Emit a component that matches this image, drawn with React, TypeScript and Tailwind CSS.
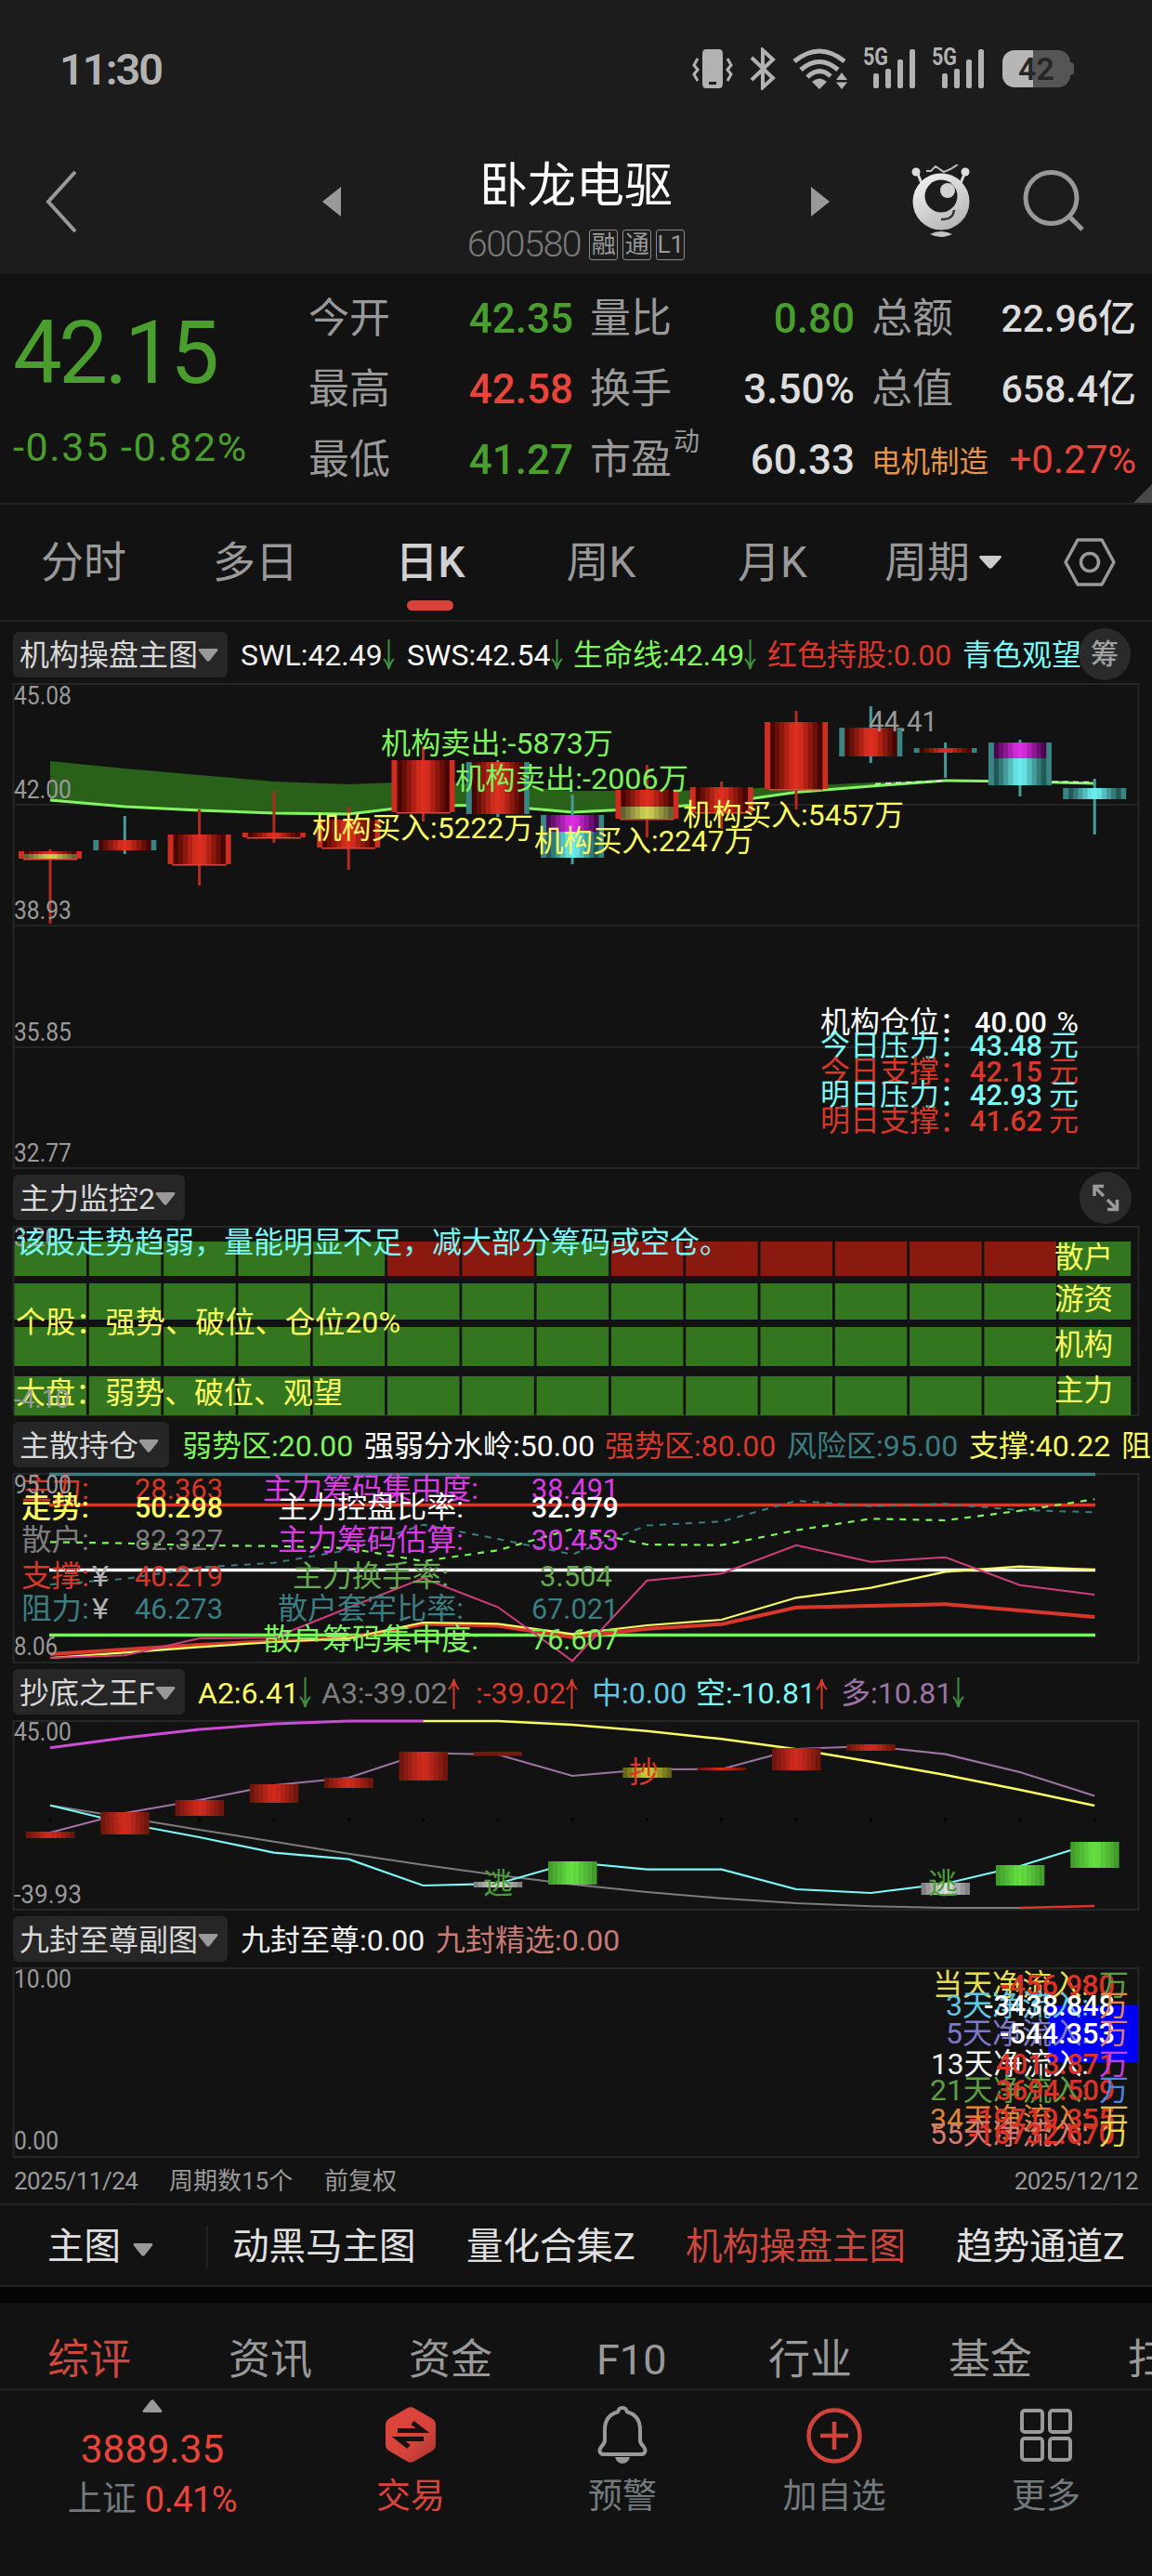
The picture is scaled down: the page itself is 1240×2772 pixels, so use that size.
import type { ReactNode } from 'react';
import { clsx } from 'clsx';

/* ---------- shared helpers ---------- */

const STEP = 80.3;
const FIRST_X = 54;
const columnX = (index: number) => FIRST_X + index * STEP;

const toPoints = (ys: number[], from = 0) =>
  ys.map((y, i) => `${columnX(from + i).toFixed(1)},${y}`).join(' ');

interface LabelProps {
  x: number;
  y: number;
  w?: number;
  fill: string;
  size?: number;
  weight?: number;
  anchor?: 'start' | 'middle' | 'end';
  children: string;
}

function Label({ x, y, w, fill, size = 32, weight = 400, anchor, children }: LabelProps) {
  return (
    <text
      x={x}
      y={y}
      fill={fill}
      fontSize={size}
      fontWeight={weight}
      textAnchor={anchor}
      textLength={w}
      lengthAdjust={w ? 'spacingAndGlyphs' : undefined}
    >
      {children}
    </text>
  );
}

function AxisLabel({ y, w, children }: { y: number; w: number; children: string }) {
  return (
    <Label x={15} y={y} w={w} size={27} fill="#999999">
      {children}
    </Label>
  );
}

type Rgb = [number, number, number];

const PALETTE: Record<string, { edge: Rgb; core: Rgb }> = {
  red: { edge: [70, 5, 0], core: [220, 47, 32] },
  magenta: { edge: [75, 5, 80], core: [220, 45, 228] },
  cyan: { edge: [35, 88, 86], core: [108, 236, 236] },
  yellow: { edge: [96, 100, 52], core: [206, 206, 82] },
  barRed: { edge: [112, 22, 14], core: [206, 42, 30] },
  barGreen: { edge: [66, 158, 42], core: [100, 220, 66] },
  barWhite: { edge: [130, 130, 130], core: [220, 220, 220] },
  barYellow: { edge: [104, 104, 24], core: [200, 200, 60] },
};

// Vertical stripes shading from the edge colour to the core colour and back
function Cylinder({
  x,
  y,
  width,
  height,
  tone,
}: {
  x: number;
  y: number;
  width: number;
  height: number;
  tone: string;
}) {
  const { edge, core } = PALETTE[tone];
  const count = 11;
  const stripe = width / count;
  return (
    <g>
      {Array.from({ length: count }, (_, i) => {
        const t = Math.min(1, (1 - Math.abs(i - 5) / 5) * 1.15);
        const rgb = edge.map((c, k) => Math.round(c + (core[k] - c) * t));
        return (
          <rect
            key={i}
            x={x + i * stripe}
            y={y}
            width={stripe + 0.4}
            height={height}
            fill={`rgb(${rgb.join(',')})`}
          />
        );
      })}
    </g>
  );
}

function Panel({ top, bottom, children }: { top: number; bottom: number; children: ReactNode }) {
  return (
    <svg
      className="block w-full shrink-0 overflow-visible"
      viewBox={`0 ${top} 1240 ${bottom - top}`}
      width={1240}
      height={bottom - top}
    >
      <rect
        x={14.5}
        y={top + 1}
        width={1211}
        height={bottom - top - 2}
        fill="none"
        stroke="#262626"
        strokeWidth={2}
      />
      {children}
    </svg>
  );
}

function Caret({ className }: { className?: string }) {
  return (
    <svg className={className} width={22} height={14} viewBox="0 0 22 14" fill="currentColor">
      <path d="M1.5 0h19q1.6 1 .4 2.6L12.6 13q-1.600 1.4-3.200 0L1.100 2.600Q0 1 1.500 0z" />
    </svg>
  );
}

function Trend({ dir }: { dir: 'up' | 'down' }) {
  return (
    <svg
      className={clsx('shrink-0', dir === 'up' ? 'rotate-180 text-[#d33a2c]' : 'text-[#3f8f42]')}
      width={13}
      height={34}
      viewBox="0 0 13 34"
      fill="none"
      stroke="currentColor"
      strokeWidth={2}
    >
      <path d="M6.500 0v32M1 21q4 4 5.500 11q1.500-7 5.500-11" />
    </svg>
  );
}

interface Reading {
  text: string;
  color: string;
  dir?: 'up' | 'down';
  width: string;
}

function IndicatorBar({
  name,
  nameWidth,
  readings = [],
  first,
  children,
}: {
  name: string;
  nameWidth: string;
  readings?: Reading[];
  first?: boolean;
  children?: ReactNode;
}) {
  return (
    <div
      className={clsx(
        'flex w-full shrink-0 items-center overflow-hidden pl-[14px] text-[32px] leading-none whitespace-nowrap',
        first ? 'h-[66px] pt-1' : 'h-[61px]'
      )}
    >
      <div
        className={clsx(
          'mr-[14px] flex h-[49px] shrink-0 items-center rounded-md bg-[#262626] pt-[2px] pl-[7px] text-[#d8d8d8]',
          nameWidth
        )}
      >
        {name}
        <Caret className="text-[#999999]" />
      </div>
      {readings.map((reading) => (
        <div
          key={reading.text}
          className={clsx('mr-[12px] flex shrink-0 items-center pt-[2px]', reading.width)}
        >
          <span className={reading.color}>{reading.text}</span>
          {reading.dir && <Trend dir={reading.dir} />}
        </div>
      ))}
      {children}
    </div>
  );
}

/* ---------- status bar and title ---------- */

function Signal() {
  return (
    <svg className="overflow-visible" width={62} height={46} viewBox="0 0 62 46" fill="#b2b2b2">
      <text x={0} y={19} fontSize={25} fontWeight={700} textLength={27} lengthAdjust="spacingAndGlyphs">
        5G
      </text>
      <rect x={11} y={28} width={6} height={16} rx={2} />
      <rect x={24} y={23} width={6} height={21} rx={2} />
      <rect x={37} y={13} width={6} height={31} rx={2} />
      <rect x={50} y={2} width={6} height={42} rx={2} />
    </svg>
  );
}

function StatusBar() {
  return (
    <div className="flex h-[148px] items-center pr-[84px] pl-[64px] text-[#b2b2b2]">
      <span className="text-[47px] leading-none font-semibold tracking-[-2px]">11:30</span>
      <div className="ml-auto flex items-center">
        {/* Vibrate */}
        <svg width={44} height={46} viewBox="0 0 44 46" fill="none" stroke="#b2b2b2" strokeWidth={3}>
          <path
            fill="#b2b2b2"
            stroke="none"
            fillRule="evenodd"
            d="M15 2h14q4 0 4 5v32q0 5-4 5H15q-4 0-4-5V7q0-5 4-5zm3 35v3h8v-3z"
          />
          <path d="M6 12l-4 7 4 5-4 5 4 7M38 12l4 7-4 5 4 5-4 7" />
        </svg>
        {/* Bluetooth */}
        <svg className="ml-[17px]" width={30} height={46} viewBox="0 0 30 46" fill="none" stroke="#b2b2b2" strokeWidth={4}>
          <path d="M3 11l23 22-11 10V3l11 10L3 35" />
        </svg>
        {/* Wifi */}
        <svg className="ml-[16px]" width={62} height={46} viewBox="0 0 62 46" fill="none" stroke="#b2b2b2" strokeWidth={5}>
          <path d="M3 15Q30-7 57 15M10 24Q30 7 50 24M17 32Q30 20 42 31" />
          <path d="M22 37q8-7 16 0l-8 8z" fill="#b2b2b2" stroke="none" />
          <path d="M48 35l6-8 6 8zM48 37.500h12l-6 7.500z" fill="#b2b2b2" stroke="none" />
        </svg>
        <div className="ml-[15px] flex gap-[12px]">
          <Signal />
          <Signal />
        </div>
        {/* Battery */}
        <div className="ml-[14px] flex items-center">
          <div className="flex h-[40px] w-[73px] items-center justify-center rounded-[13px] bg-linear-to-r from-[#b6b6b6] from-45% to-[#555555] to-45% text-[34px] leading-none font-semibold text-[#262626]">
            42
          </div>
          <div className="h-[14px] w-[4px] rounded-r bg-[#555555]" />
        </div>
      </div>
    </div>
  );
}

function Robot() {
  return (
    <svg width={64} height={80} viewBox="0 0 64 80">
      <defs>
        <linearGradient id="robot" x1="0" y1="0" x2="0.600" y2="1">
          <stop offset="0" stopColor="#f6f6f6" />
          <stop offset="1" stopColor="#b8b8b8" />
        </linearGradient>
      </defs>
      <path d="M6 8l5 12M58 8l-5 12" stroke="#d8d8d8" strokeWidth={3} />
      <circle cx={5} cy={8} r={4.500} fill="#dddddd" />
      <circle cx={58} cy={8} r={4.500} fill="#dddddd" />
      <path d="M16 7h5l5-5 9 6 7-3 8-5" fill="none" stroke="#bdbdbd" strokeWidth={2} />
      <circle cx={32} cy={40} r={30.500} fill="url(#robot)" />
      <circle cx={32} cy={34} r={17.500} fill="#1c1c1c" />
      <circle cx={39} cy={28} r={8} fill="#d2d2d2" />
      <path d="M32 59q13 1 14-10" fill="none" stroke="#333333" strokeWidth={2.500} />
      <path d="M20 75q12-6 24 0-12 6-24 0z" fill="#c4c4c4" />
    </svg>
  );
}

function TitleBar() {
  return (
    <div className="flex h-[147px] items-start">
      <svg className="mt-[36px] ml-[48px]" width={36} height={66} viewBox="0 0 36 66" fill="none" stroke="#999999" strokeWidth={4}>
        <path d="M33 1L4 33l29 32" />
      </svg>
      <svg className="mt-[53px] ml-[263px]" width={20} height={32} viewBox="0 0 20 32" fill="#999999">
        <path d="M20 0v32L0 16z" />
      </svg>
      <div className="flex w-[506px] flex-col items-center pt-[26px]">
        <h1 className="text-[52px] leading-[54px] text-white">卧龙电驱</h1>
        <div className="mt-[18px] flex h-[34px] items-center gap-[5px] text-[#999999]">
          <span className="mr-[4px] text-[39.500px] leading-none font-light tracking-[-1.500px] text-[#7a7a7a]">
            600580
          </span>
          {['融', '通', 'L1'].map((tag) => (
            <span
              key={tag}
              className="flex h-[33px] w-[31px] items-center justify-center rounded-[3px] border-[1.500px] border-[#8c8c8c] text-[26px] leading-none"
            >
              {tag}
            </span>
          ))}
        </div>
      </div>
      <svg className="mt-[53px]" width={20} height={32} viewBox="0 0 20 32" fill="#999999">
        <path d="M0 0v32l20-16z" />
      </svg>
      <div className="mt-[29px] ml-[88px]">
        <Robot />
      </div>
      <svg className="mt-[34px] ml-[55px]" width={68} height={68} viewBox="0 0 68 68" fill="none" stroke="#999999" strokeWidth={5}>
        <circle cx={31.500} cy={31} r={27.500} />
        <path d="M50 50l15 15" />
      </svg>
    </div>
  );
}

/* ---------- quote ---------- */

const QUOTES = [
  [
    { label: '今开', value: '42.35', color: 'text-[#4a9e2e]' },
    { label: '最高', value: '42.58', color: 'text-[#e8453a]' },
    { label: '最低', value: '41.27', color: 'text-[#4a9e2e]' },
  ],
  [
    { label: '量比', value: '0.80', color: 'text-[#4a9e2e]' },
    { label: '换手', value: '3.50%', color: 'text-[#dddddd]' },
    { label: '市盈', note: '动', value: '60.33', color: 'text-[#dddddd]' },
  ],
];

function Quote() {
  return (
    <div className="flex h-[248px] shrink-0 border-b-2 border-[#242424]">
      <div className="w-[332px] shrink-0 pl-[14px] text-[#4a9e2e]">
        <div className="mt-[38px] text-[94px] leading-none tracking-[-3.500px]">42.15</div>
        <div className="mt-[33px] text-[43px] leading-none tracking-[1.600px] whitespace-nowrap">
          -0.35 -0.82%
        </div>
      </div>
      <div className="flex flex-1 gap-[18px] pt-[10px] text-[44px] leading-none">
        {QUOTES.map((column, index) => (
          <div key={index} className="w-[285px] shrink-0">
            {column.map((row) => (
              <div key={row.label} className="flex h-[76px] items-center">
                <span className="text-[#999999]">{row.label}</span>
                {row.note && (
                  <span className="mb-[38px] ml-[2px] text-[28px] text-[#999999]">{row.note}</span>
                )}
                <span className={clsx('ml-auto font-medium', row.color)}>{row.value}</span>
              </div>
            ))}
          </div>
        ))}
        <div className="w-[285px] shrink-0">
          <div className="flex h-[76px] items-center justify-between">
            <span className="text-[#999999]">总额</span>
            <span className="text-[41px] font-medium text-[#dddddd]">22.96亿</span>
          </div>
          <div className="flex h-[76px] items-center justify-between">
            <span className="text-[#999999]">总值</span>
            <span className="text-[41px] font-medium text-[#dddddd]">658.4亿</span>
          </div>
          <div className="flex h-[76px] items-center justify-between">
            <span className="pt-[6px] text-[31.500px] text-[#e8954c]">电机制造</span>
            <span className="text-[42px] text-[#e8453a]">+0.27%</span>
          </div>
        </div>
        <svg className="mt-[216px] -ml-[21px] shrink-0" width={20} height={20} viewBox="0 0 20 20" fill="#484848">
          <path d="M20 0v20H0z" />
        </svg>
      </div>
    </div>
  );
}

function PeriodTabs() {
  return (
    <div className="flex h-[126px] shrink-0 border-b-2 border-[#242424] text-[46px] leading-none text-[#999999]">
      <div className="flex w-[180px] items-center justify-center">分时</div>
      <div className="flex w-[190px] items-center justify-center">多日</div>
      <div className="flex w-[186px] flex-col items-center pt-[39px] text-[#d0d0d0]">
        <span className="h-[46px] font-medium">日K</span>
        <span className="mt-[18px] h-[11px] w-[50px] rounded-full bg-[#d5433b]" />
      </div>
      <div className="flex w-[182px] items-center justify-center">周K</div>
      <div className="flex w-[187px] items-center justify-center">月K</div>
      <div className="flex flex-1 items-center pl-[27px]">
        周期
        <Caret className="ml-[11px] scale-x-115 text-[#cccccc]" />
        <svg className="ml-[68px]" width={56} height={52} viewBox="0 0 56 52" fill="none" stroke="#999999" strokeWidth={3.500}>
          <path d="M15 2h26l13 24-13 24H15L2 26z" strokeLinejoin="round" />
          <circle cx={28} cy={26} r={9.500} />
        </svg>
      </div>
    </div>
  );
}

/* ---------- main chart ---------- */

interface Candle {
  frame: 'red' | 'teal';
  high: number;
  top: number;
  bottom: number;
  low: number;
  tone: string;
  lower?: string;
  split?: number;
}

const CANDLES: Candle[] = [
  { frame: 'red', high: 914, top: 916, bottom: 924, low: 994, tone: 'red', lower: 'yellow', split: 919 },
  { frame: 'teal', high: 878, top: 904, bottom: 915, low: 919, tone: 'red' },
  { frame: 'red', high: 871, top: 898, bottom: 930, low: 953, tone: 'red' },
  { frame: 'red', high: 851, top: 896, bottom: 901, low: 907, tone: 'red' },
  { frame: 'red', high: 868, top: 882, bottom: 912, low: 936, tone: 'red' },
  { frame: 'red', high: 803, top: 818, bottom: 874, low: 884, tone: 'red' },
  { frame: 'teal', high: 818, top: 820, bottom: 876, low: 879, tone: 'red' },
  { frame: 'teal', high: 855, top: 877, bottom: 923, low: 930, tone: 'magenta', lower: 'cyan', split: 895 },
  { frame: 'red', high: 823, top: 850, bottom: 881, low: 901, tone: 'red', lower: 'yellow', split: 868 },
  { frame: 'red', high: 841, top: 847, bottom: 874, low: 892, tone: 'red' },
  { frame: 'red', high: 765, top: 777, bottom: 849, low: 871, tone: 'red' },
  { frame: 'teal', high: 760, top: 783, bottom: 814, low: 821, tone: 'red' },
  { frame: 'teal', high: 799, top: 805, bottom: 810, low: 837, tone: 'red' },
  { frame: 'teal', high: 796, top: 799, bottom: 845, low: 857, tone: 'magenta', lower: 'cyan', split: 816 },
  { frame: 'teal', high: 838, top: 848, bottom: 860, low: 898, tone: 'cyan' },
];

const LIFE_LINE = [861, 868, 872, 875, 876, 866.500, 867, 874, 870, 864, 852.500, 846, 840, 841, 843];
const BAND_TOP = [819, 827, 834, 841, 844, 841, 845, 851, 851, 850, 846, 842, 839, 841, 843];

function CandleShape({ candle, x }: { candle: Candle; x: number }) {
  const { frame, high, top, bottom, low, tone, lower, split } = candle;
  const border = frame === 'red' ? '#cf2d20' : '#3b8484';
  const wick = frame === 'red' ? '#b32a1f' : '#4a9a9a';
  return (
    <g>
      <rect x={x - 1.500} y={high} width={3} height={low - high} fill={wick} />
      <rect x={x - 34} y={top} width={68} height={bottom - top} fill={border} />
      {frame === 'red' && <rect x={x - 29} y={bottom} width={58} height={1.500} fill="#d8463a" />}
      <Cylinder x={x - 28} y={top} width={56} height={(split ?? bottom) - top} tone={tone} />
      {lower && split && <Cylinder x={x - 28} y={split} width={56} height={bottom - split} tone={lower} />}
    </g>
  );
}

const LEVELS = [
  { label: '机构仓位：', value: '40.00', unit: '%', y: 1111, fill: '#ffffff', offset: 5 },
  { label: '今日压力：', value: '43.48', unit: '元', y: 1136, fill: '#7df6f6', offset: 0 },
  { label: '今日支撑：', value: '42.15', unit: '元', y: 1164, fill: '#d8372a', offset: 0 },
  { label: '明日压力：', value: '42.93', unit: '元', y: 1189, fill: '#7df6f6', offset: 0 },
  { label: '明日支撑：', value: '41.62', unit: '元', y: 1217, fill: '#d8372a', offset: 0 },
];

function MainChart() {
  const band = `${toPoints(BAND_TOP)} ${toPoints(LIFE_LINE).split(' ').reverse().join(' ')}`;
  return (
    <Panel top={735} bottom={1258}>
      {[866, 996, 1127].map((y) => (
        <line key={y} x1={14} x2={1225} y1={y} y2={y} stroke="#242424" strokeWidth={2} />
      ))}
      <polygon points={band} fill="#2a611a" />
      <polyline points={toPoints(LIFE_LINE)} fill="none" stroke="#82f561" strokeWidth={3} />
      <path d="M942 843.500L1018 840M1100 841l78 0.500" stroke="#e8e8e8" strokeWidth={1.500} strokeDasharray="6 5" />
      {CANDLES.map((candle, i) => (
        <CandleShape key={i} candle={candle} x={columnX(i)} />
      ))}

      <AxisLabel y={758} w={62}>45.08</AxisLabel>
      <AxisLabel y={859} w={62}>42.00</AxisLabel>
      <AxisLabel y={989} w={62}>38.93</AxisLabel>
      <AxisLabel y={1120} w={62}>35.85</AxisLabel>
      <AxisLabel y={1250} w={62}>32.77</AxisLabel>

      <Label x={410} y={811} w={250} fill="#7df35e">机构卖出:-5873万</Label>
      <Label x={490} y={849} w={251} fill="#7df35e">机构卖出:-2006万</Label>
      <Label x={336} y={902} w={238} fill="#fafa62">机构买入:5222万</Label>
      <Label x={575} y={916} w={236} fill="#fafa62">机构买入:2247万</Label>
      <Label x={735} y={888} w={238} fill="#fafa62">机构买入:5457万</Label>
      <Label x={935} y={787} w={74} fill="#999999">44.41</Label>

      {LEVELS.map((level) => (
        <g key={level.label}>
          <Label x={883} y={level.y} fill={level.fill}>{level.label}</Label>
          <Label x={1044 + level.offset} y={level.y} w={78} weight={500} fill={level.fill}>
            {level.value}
          </Label>
          <Label x={1161} y={level.y} anchor="end" fill={level.fill}>{level.unit}</Label>
        </g>
      ))}
    </Panel>
  );
}

/* ---------- force monitor ---------- */

const HEAT_ROWS = [
  { label: '散户', y: 1336, height: 37, textY: 1364, red: [5, 6, 8, 9, 10, 11, 12, 13] },
  { label: '游资', y: 1381, height: 39, textY: 1409, red: [] },
  { label: '机构', y: 1428, height: 42, textY: 1458, red: [] },
  { label: '主力', y: 1481, height: 42, textY: 1507, red: [] },
];

function HeatPanel() {
  return (
    <Panel top={1319} bottom={1524}>
      {HEAT_ROWS.map((row) =>
        Array.from({ length: 15 }, (_, i) => (
          <rect
            key={`${row.label}${i}`}
            x={15.500 + i * STEP}
            y={row.y}
            width={77.500}
            height={row.height}
            fill={(row.red as number[]).includes(i) ? '#8a1910' : '#33761f'}
          />
        ))
      )}
      {HEAT_ROWS.map((row) => (
        <Label key={row.label} x={1135} y={row.textY} w={63} fill="#fafa62">
          {row.label}
        </Label>
      ))}
      <AxisLabel y={1341} w={47}>3.20</AxisLabel>
      <Label x={17} y={1348} w={768} fill="#7df6f6">
        该股走势趋弱，量能明显不足，减大部分筹码或空仓。
      </Label>
      <Label x={17} y={1434} w={414} fill="#fafa62">个股：强势、破位、仓位20%</Label>
      <Label x={17} y={1510} w={352} fill="#fafa62">大盘：弱势、破位、观望</Label>
      <AxisLabel y={1515} w={60}>-4.10</AxisLabel>
    </Panel>
  );
}

/* ---------- holdings ---------- */

const HOLD_LINES = [
  {
    color: '#3b7d80',
    width: 2,
    dash: '7 7',
    ys: [1705, 1699, 1686.700, 1681.700, 1668, 1640.700, 1656, 1672.700, 1641.500, 1637.300, 1615, 1620.700, 1618.300, 1625, 1627.300],
  },
  {
    color: '#7df35e',
    width: 2.200,
    dash: '7 7',
    ys: [1659.300, 1660.700, 1663, 1663.700, 1666, 1680, 1668.300, 1645.300, 1662, 1662.700, 1646.700, 1634.300, 1636, 1625.700, 1613.300],
  },
  {
    color: '#d8372a',
    width: 4,
    ys: [1780, 1775, 1770, 1766, 1763, 1747.500, 1749.500, 1761.700, 1752.700, 1747.700, 1729.700, 1728, 1726.300, 1733, 1740],
  },
  {
    color: '#fafa62',
    width: 2.200,
    ys: [1784, 1778.300, 1772.300, 1767, 1763, 1746, 1747.300, 1758.300, 1749, 1743, 1719.300, 1708.700, 1691.300, 1685.700, 1689],
  },
  {
    color: '#cf3d7c',
    width: 2,
    ys: [1784, 1781.300, 1763, 1762.300, 1730, 1698.300, 1729.300, 1787.300, 1700.700, 1693.300, 1662.700, 1680.700, 1675.700, 1705.700, 1716],
  },
];

const HOLD_LEFT = [
  { label: '主力:', value: '28.363', y: 1613, fill: '#d8372a' },
  { label: '走势:', value: '50.298', y: 1633, fill: '#fafa62', weight: 500 },
  { label: '散户:', value: '82.327', y: 1668, fill: '#7d7d7d' },
  { label: '支撑:', value: '40.219', y: 1707, fill: '#d8372a', yuan: true },
  { label: '阻力:', value: '46.273', y: 1742, fill: '#3b7d80', yuan: true },
];

const HOLD_RIGHT = [
  { label: '主力筹码集中度:', x: 283, w: 232, value: '38.491', y: 1613, fill: '#dc3ae6' },
  { label: '主力控盘比率:', x: 299, w: 200, value: '32.979', y: 1633, fill: '#ffffff', weight: 500 },
  { label: '主力筹码估算:', x: 299, w: 200, value: '30.453', y: 1668, fill: '#dc3ae6' },
  { label: '主力换手率:', x: 315, w: 168, value: '3.504', y: 1707, fill: '#66aa50' },
  { label: '散户套牢比率:', x: 299, w: 200, value: '67.021', y: 1742, fill: '#3b7d80' },
  { label: '散户筹码集中度:', x: 283, w: 232, value: '76.607', y: 1775, fill: '#7df35e' },
];

function HoldingPanel() {
  return (
    <Panel top={1585} bottom={1790}>
      <line x1={53} x2={1179} y1={1619.500} y2={1619.500} stroke="#d8372a" strokeWidth={3.500} />
      <line x1={53} x2={1179} y1={1689.500} y2={1689.500} stroke="#ffffff" strokeWidth={3.500} />
      <line x1={53} x2={1179} y1={1759.500} y2={1759.500} stroke="#7df35e" strokeWidth={3.500} />
      <line x1={53} x2={1179} y1={1586.500} y2={1586.500} stroke="#3b7d80" strokeWidth={3.500} />
      {HOLD_LINES.map((line) => (
        <polyline
          key={line.color}
          points={toPoints(line.ys)}
          fill="none"
          stroke={line.color}
          strokeWidth={line.width}
          strokeDasharray={line.dash}
        />
      ))}
      {HOLD_LEFT.map((row) => (
        <g key={row.label}>
          <Label x={23} y={row.y} w={73} fill={row.fill} weight={row.weight}>{row.label}</Label>
          {row.yuan && <Label x={99} y={row.y} w={18} fill="#b0b0b0">¥</Label>}
          <Label x={145} y={row.y} w={95} fill={row.fill} weight={row.weight}>{row.value}</Label>
        </g>
      ))}
      {HOLD_RIGHT.map((row) => (
        <g key={row.label}>
          <Label x={row.x} y={row.y} w={row.w} fill={row.fill}>{row.label}</Label>
          <Label
            x={row.value.length === 5 ? 581 : 572}
            y={row.y}
            w={row.value.length === 5 ? 78 : 94}
            fill={row.fill}
            weight={row.weight}
          >
            {row.value}
          </Label>
        </g>
      ))}
      <AxisLabel y={1607} w={62}>95.00</AxisLabel>
      <AxisLabel y={1781} w={47}>8.06</AxisLabel>
    </Panel>
  );
}

/* ---------- bottom king ---------- */

const BARS = [
  { i: 0, top: 1971, bottom: 1978, tone: 'barRed' },
  { i: 1, top: 1950, bottom: 1974, tone: 'barRed' },
  { i: 2, top: 1937, bottom: 1954, tone: 'barRed' },
  { i: 3, top: 1920, bottom: 1940, tone: 'barRed' },
  { i: 4, top: 1913, bottom: 1924, tone: 'barRed' },
  { i: 5, top: 1885, bottom: 1916, tone: 'barRed' },
  { i: 8, top: 1902, bottom: 1913, tone: 'barYellow' },
  { i: 9, top: 1902, bottom: 1905, tone: 'barRed' },
  { i: 10, top: 1881, bottom: 1905, tone: 'barRed' },
  { i: 11, top: 1877, bottom: 1884, tone: 'barRed' },
  { i: 6, top: 2025, bottom: 2031, tone: 'barWhite' },
  { i: 12, top: 2026, bottom: 2039, tone: 'barWhite' },
  { i: 7, top: 2003, bottom: 2028, tone: 'barGreen' },
  { i: 13, top: 2007, bottom: 2029, tone: 'barGreen' },
  { i: 14, top: 1982, bottom: 2010, tone: 'barGreen' },
];

const KING_LINES = [
  { from: 0, color: '#cf4ad6', width: 3, ys: [1880.700, 1870, 1861, 1855, 1852, 1852] },
  { from: 5, color: '#fafa62', width: 2.500, ys: [1852, 1852, 1856, 1862.700, 1871.300, 1882.300, 1895.700, 1910, 1926, 1943] },
  {
    from: 0,
    color: '#7c7c7c',
    width: 2,
    ys: [1942.700, 1955.700, 1969, 1981.700, 1994.700, 2006.700, 2017.700, 2027.700, 2036, 2042.700, 2048, 2051.300, 2053, 2053],
  },
  { from: 13, color: '#d8372a', width: 2.500, ys: [2053, 2051] },
  {
    from: 0,
    color: '#9c73a3',
    width: 2.200,
    ys: [1972, 1951, 1937, 1921, 1913, 1886.500, 1888, 1911, 1904, 1903.700, 1882, 1879, 1887.700, 1907, 1932.500],
  },
  {
    from: 0,
    color: '#7df6f6',
    width: 2.200,
    ys: [1942.700, 1962, 1977, 1993.700, 2000.700, 2029, 2027, 2004, 2011.700, 2011.700, 2033, 2037, 2027, 2008, 1983],
  },
];

function KingPanel() {
  return (
    <Panel top={1851} bottom={2056}>
      {KING_LINES.map((line) => (
        <polyline
          key={line.color}
          points={toPoints(line.ys, line.from)}
          fill="none"
          stroke={line.color}
          strokeWidth={line.width}
        />
      ))}
      {Array.from({ length: 15 }, (_, i) => (
        <circle key={i} cx={columnX(i)} cy={1958} r={1.800} fill="#000000" />
      ))}
      <rect x={columnX(6) - 26} y={1885} width={52} height={4.500} fill="#7c170f" />
      {BARS.map((bar) => (
        <Cylinder
          key={bar.i}
          x={columnX(bar.i) - 26}
          y={bar.top}
          width={52}
          height={bar.bottom - bar.top}
          tone={bar.tone}
        />
      ))}
      <Label x={693} y={1918} anchor="middle" fill="#e03526">抄</Label>
      <Label x={536} y={2038} anchor="middle" fill="#4a9e36">逃</Label>
      <Label x={1015} y={2038} anchor="middle" fill="#4a9e36">逃</Label>
      <AxisLabel y={1873} w={62}>45.00</AxisLabel>
      <AxisLabel y={2048} w={73}>-39.93</AxisLabel>
    </Panel>
  );
}

/* ---------- net inflow ---------- */

const FLOWS = [
  { label: '当天净流入:', x: 1004, value: '-456.980', w: 124, y: 2147, fill: '#e4dd55', valueFill: '#dc3226', unitFill: '#5d9e42' },
  { label: '3天净流入:', x: 1018, value: '-3438.848', w: 141, y: 2169, fill: '#62c6e4', valueFill: '#ffffff', unitFill: '#e08a45' },
  { label: '5天净流入:', x: 1018, value: '-544.353', w: 124, y: 2199, fill: '#7c78c6', valueFill: '#ffffff', unitFill: '#d87f7a' },
  { label: '13天净流入:', x: 1002, value: '4013.871', w: 128, y: 2232, fill: '#f4f4f4', valueFill: '#dc3226', unitFill: '#c840dc' },
  { label: '21天净流入:', x: 1001, value: '3694.509', w: 128, y: 2260, fill: '#5d9e42', valueFill: '#dc3226', unitFill: '#4b86e0' },
  { label: '34天净流入:', x: 1001, value: '-19719.355', w: 158, y: 2291, fill: '#dd8538', valueFill: '#dc3226', unitFill: '#e4b94e' },
  { label: '55天净流入:', x: 1001, value: '-16732.670', w: 158, y: 2307, fill: '#d37a72', valueFill: '#dc3226', unitFill: '#e4dd55' },
];

function FlowPanel() {
  return (
    <Panel top={2117} bottom={2322}>
      <rect x={1128} y={2158} width={97} height={61} fill="#0000f5" />
      {FLOWS.map((flow) => (
        <g key={flow.label}>
          <Label x={flow.x} y={flow.y} w={1172 - flow.x} fill={flow.fill}>{flow.label}</Label>
          <Label x={1200} y={flow.y} w={flow.w} anchor="end" weight={500} fill={flow.valueFill}>
            {flow.value}
          </Label>
          <Label x={1183} y={flow.y} fill={flow.unitFill}>万</Label>
        </g>
      ))}
      <AxisLabel y={2139} w={62}>10.00</AxisLabel>
      <AxisLabel y={2313} w={48}>0.00</AxisLabel>
    </Panel>
  );
}

/* ---------- bottom bars ---------- */

function ChartSwitcher() {
  return (
    <div className="flex h-[90px] shrink-0 items-center border-t-2 border-b-2 border-[#242424] pt-[4px] pl-[51px] text-[39.500px] leading-none whitespace-nowrap text-[#e0e0e0]">
      <span className="w-[79px]">主图</span>
      <Caret className="mt-[6px] ml-[13px] text-[#999999]" />
      <span className="ml-[57px] h-[46px] w-[2px] bg-[#222222]" />
      <span className="ml-[26px] w-[252px]">动黑马主图</span>
      <span className="w-[236px]">量化合集Z</span>
      <span className="w-[291px] text-[#cb473d]">机构操盘主图</span>
      <span>趋势通道Z</span>
    </div>
  );
}

const SECTIONS = [
  { name: '综评', width: 'w-[195px]' },
  { name: '资讯', width: 'w-[194px]' },
  { name: '资金', width: 'w-[202px]' },
  { name: 'F10', width: 'w-[185px]' },
  { name: '行业', width: 'w-[194px]' },
  { name: '基金', width: 'w-[193px]' },
  { name: '扫', width: 'w-[45px]' },
];

function SectionTabs() {
  return (
    <div className="flex h-[95px] shrink-0 items-center overflow-hidden border-b-3 border-[#1e1e1e] pt-[31px] pl-[51px] text-[45px] leading-none text-[#999999]">
      {SECTIONS.map((section, i) => (
        <span
          key={section.name}
          className={clsx('shrink-0', section.width, i === 0 && 'text-[#d0473d]')}
        >
          {section.name}
        </span>
      ))}
    </div>
  );
}

function NavItem({ label, active, children }: { label: string; active?: boolean; children: ReactNode }) {
  return (
    <div
      className={clsx(
        'flex w-[228px] flex-col items-center pt-[15px]',
        active ? 'text-[#d8443b]' : 'text-[#727a7e]'
      )}
    >
      {children}
      <span className="mt-[16px] text-[37px] leading-none">{label}</span>
    </div>
  );
}

function BottomNav() {
  return (
    <div className="flex h-[199px] shrink-0">
      <div className="flex w-[328px] flex-col items-center pt-[9px]">
        <Caret className="rotate-180 text-[#999999]" />
        <span className="mt-[19px] text-[42.500px] leading-none text-[#e8453a]">3889.35</span>
        <span className="mt-[13px] flex items-center gap-[9px] text-[37px] leading-none text-[#727a7e]">
          上证
          <span className="text-[38px] tracking-[-0.500px] text-[#e8453a]">0.41%</span>
        </span>
      </div>
      <NavItem label="交易" active>
        <svg width={62} height={64} viewBox="0 0 62 64">
          <defs>
            <linearGradient id="trade" x1="0" y1="0" x2="1" y2="1">
              <stop offset="0" stopColor="#e0463d" />
              <stop offset="0.600" stopColor="#d6423a" />
              <stop offset="1" stopColor="#a8362f" />
            </linearGradient>
          </defs>
          <path
            d="M27 3.500q4-2.500 8 0l19 11q4 2.500 4 7v21q0 4.500-4 7l-19 11q-4 2.500-8 0l-19-11q-4-2.500-4-7v-21q0-4.500 4-7z"
            fill="url(#trade)"
          />
          <path d="M17 27.500h27L33 19M45 36.500H18L29 45" fill="none" stroke="#1a1010" strokeWidth={5} />
        </svg>
      </NavItem>
      <NavItem label="预警">
        <svg width={62} height={64} viewBox="0 0 62 64" fill="none" stroke="#999999" strokeWidth={4}>
          <path
            d="M31 3q4 0 5 4.500Q50 11 50 27v11q0 3 3.500 6.500 3 4 1.500 6.500-1 2-4 2H11q-3 0-4-2-1.500-2.500 1.500-6.500Q12 41 12 38V27Q12 11 26 7.500 27 3 31 3z"
            strokeLinejoin="round"
          />
          <path d="M23 56h16q-2 7-8 7t-8-7z" fill="#999999" stroke="none" />
        </svg>
      </NavItem>
      <NavItem label="加自选">
        <svg width={62} height={64} viewBox="0 0 62 64" fill="none" stroke="#d0433a" strokeWidth={4.500}>
          <circle cx={31} cy={33} r={27.500} />
          <path d="M16 33h30M31 18v30" />
        </svg>
      </NavItem>
      <NavItem label="更多">
        <svg width={62} height={64} viewBox="0 0 62 64" fill="none" stroke="#999999" strokeWidth={4}>
          <rect x={5} y={6} width={22} height={23} rx={3} />
          <rect x={35} y={6} width={22} height={23} rx={3} />
          <rect x={5} y={36} width={22} height={23} rx={3} />
          <rect x={35} y={36} width={22} height={23} rx={3} />
        </svg>
      </NavItem>
    </div>
  );
}

export default function App() {
  return (
    <div className="flex h-[2772px] w-[1240px] flex-col overflow-hidden bg-[#121212] font-['Roboto','Noto_Sans_CJK_SC',sans-serif]">
      <header className="h-[295px] shrink-0 bg-[#1c1c1c]">
        <StatusBar />
        <TitleBar />
      </header>
      <Quote />
      <PeriodTabs />

      <IndicatorBar
        first
        name="机构操盘主图"
        nameWidth="w-[231px]"
        readings={[
          { text: 'SWL:42.49', color: 'text-[#f0f0f0]', dir: 'down', width: 'w-[167px]' },
          { text: 'SWS:42.54', color: 'text-white', dir: 'down', width: 'w-[167px]' },
          { text: '生命线:42.49', color: 'text-[#7df35e]', dir: 'down', width: 'w-[197px]' },
          { text: '红色持股:0.00', color: 'text-[#d8372a]', width: 'w-[198px]' },
        ]}
      >
        <span className="w-[125px] shrink-0 pt-[2px] text-[#7df6f6]">青色观望</span>
        <span className="flex size-[56px] shrink-0 items-center justify-center rounded-full bg-[#2a2a2a] text-[30px] font-medium text-[#a0a0a0]">
          筹
        </span>
      </IndicatorBar>
      <MainChart />

      <IndicatorBar name="主力监控2" nameWidth="w-[185px]">
        <span className="mr-[22px] ml-auto flex size-[56px] items-center justify-center rounded-full bg-[#2a2a2a]">
          <svg width={30} height={30} viewBox="0 0 30 30" fill="none" stroke="#999999" strokeWidth={3.500}>
            <path d="M13 2.500H3V13M3 3l10 10M17 27.500h10.500V17M27 27L17 17" />
          </svg>
        </span>
      </IndicatorBar>
      <HeatPanel />

      <IndicatorBar
        name="主散持仓"
        nameWidth="w-[168px]"
        readings={[
          { text: '弱势区:20.00', color: 'text-[#7df35e]', width: 'w-[184px]' },
          { text: '强弱分水岭:50.00', color: 'text-white', width: 'w-[247px]' },
          { text: '强势区:80.00', color: 'text-[#d8372a]', width: 'w-[184px]' },
          { text: '风险区:95.00', color: 'text-[#3b7d80]', width: 'w-[184px]' },
          { text: '支撑:40.22', color: 'text-[#fafa62]', width: 'w-[152px]' },
          { text: '阻', color: 'text-[#fafa62]', width: 'w-[32px]' },
        ]}
      />
      <HoldingPanel />

      <IndicatorBar
        name="抄底之王F"
        nameWidth="w-[185px]"
        readings={[
          { text: 'A2:6.41', color: 'text-[#fafa62]', dir: 'down', width: 'w-[121px]' },
          { text: 'A3:-39.02', color: 'text-[#7d7d7d]', dir: 'up', width: 'w-[154px]' },
          { text: ':-39.02', color: 'text-[#d8372a]', dir: 'up', width: 'w-[113px]' },
          { text: '中:0.00', color: 'text-[#62c6e4]', width: 'w-[100px]' },
          { text: '空:-10.81', color: 'text-[#7df6f6]', dir: 'up', width: 'w-[144px]' },
          { text: '多:10.81', color: 'text-[#9c73a3]', dir: 'down', width: 'w-[134px]' },
        ]}
      />
      <KingPanel />

      <IndicatorBar
        name="九封至尊副图"
        nameWidth="w-[231px]"
        readings={[
          { text: '九封至尊:0.00', color: 'text-[#f0f0f0]', width: 'w-[198px]' },
          { text: '九封精选:0.00', color: 'text-[#c97a74]', width: 'w-[198px]' },
        ]}
      />
      <FlowPanel />

      <div className="flex h-[49px] shrink-0 items-center px-[15px] text-[26px] leading-none text-[#999999]">
        <span className="w-[167px] tracking-[-0.500px]">2025/11/24</span>
        <span className="w-[167px]">周期数15个</span>
        <span>前复权</span>
        <span className="ml-auto tracking-[-0.500px]">2025/12/12</span>
      </div>
      <ChartSwitcher />
      <div className="h-[17px] shrink-0 bg-[#060606]" />
      <SectionTabs />
      <BottomNav />
    </div>
  );
}
